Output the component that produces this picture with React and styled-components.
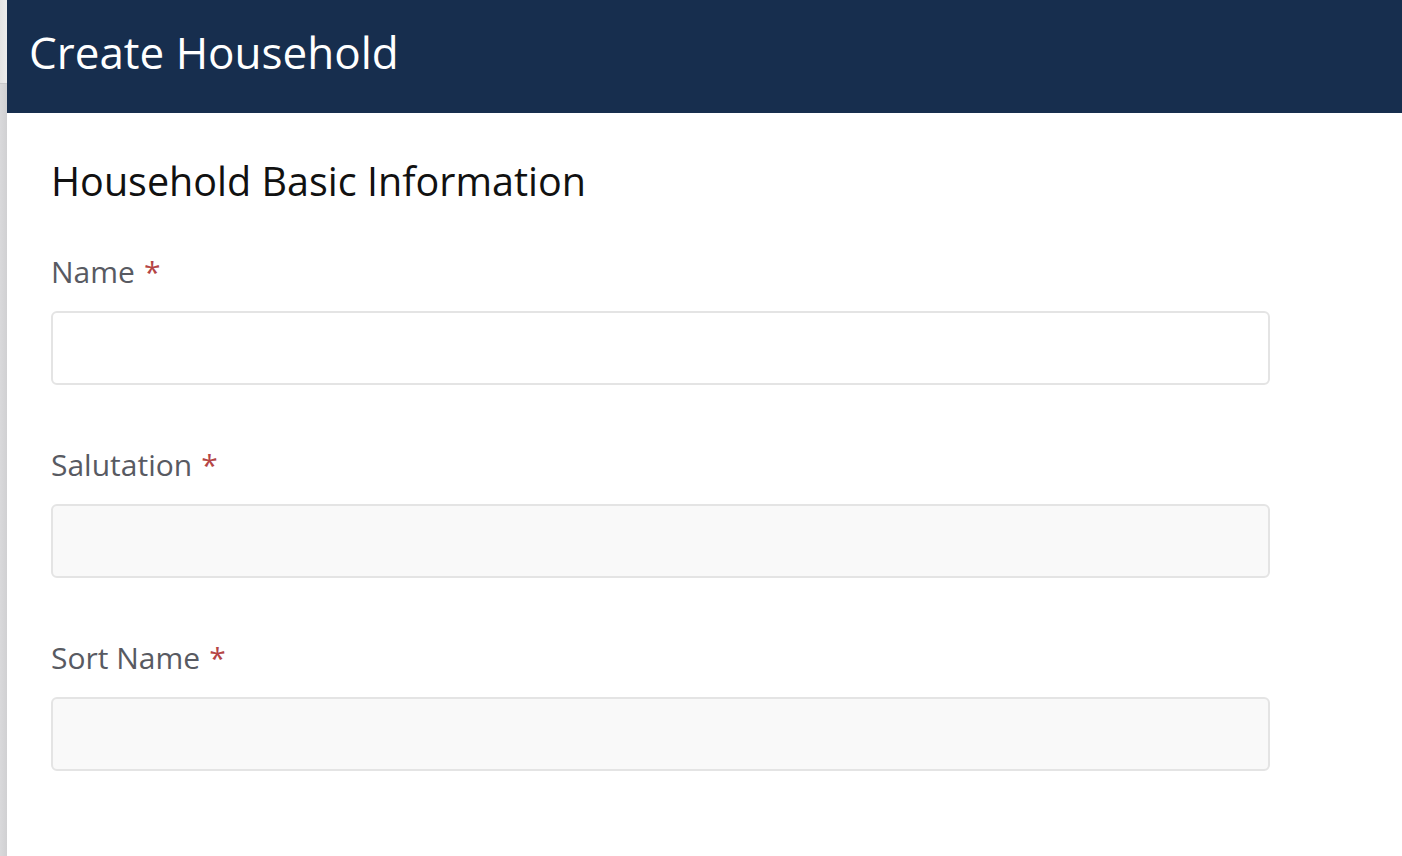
import React from 'react';
import styled, { createGlobalStyle } from 'styled-components';

const GlobalStyle = createGlobalStyle`
  html, body {
    margin: 0;
    padding: 0;
    background: #ffffff;
    font-family: "Open Sans", "Noto Sans", sans-serif;
    overflow: hidden;
  }
`;

const Page = styled.div`
  display: flex;
  height: 856px;
  overflow: hidden;
`;

const Backdrop = styled.div`
  width: 7px;
  flex-shrink: 0;
  display: flex;
  flex-direction: column;
`;

const BackdropTop = styled.div`
  height: 83px;
  background: linear-gradient(to right, #e4e4e4, #ededed);
  border-bottom: 1px solid #c9c9cb;
`;

const BackdropRest = styled.div`
  flex: 1;
  background: linear-gradient(to right, #d9d9db, #d0d0d2);
`;

const Modal = styled.div`
  flex: 1;
  display: flex;
  flex-direction: column;
  background: #ffffff;
  overflow: hidden;
`;

const Header = styled.div`
  flex-shrink: 0;
  height: 113px;
  background: #172e4e;
  display: flex;
  align-items: center;
  padding: 0 22px;
  box-sizing: border-box;
`;

const Title = styled.h1`
  margin: 0 0 8px 0;
  font-size: 44px;
  font-weight: 400;
  color: #ffffff;
  line-height: 1.2;
`;

const Body = styled.div`
  flex-shrink: 0;
  padding: 45px 132px 0 44px;
`;

const SectionTitle = styled.h2`
  margin: ${(p) => (p.$next ? '82px' : '0')} 0 46px 0;
  font-size: 39.5px;
  font-weight: 400;
  color: #111111;
  line-height: 1.2;
`;

const Field = styled.div`
  display: flex;
  flex-direction: column;
  gap: 18px;
  margin-bottom: 59px;
`;

const Label = styled.label`
  font-size: 30px;
  color: #585a62;
  line-height: 1.4;
`;

const Required = styled.span`
  color: #b54545;
  margin-left: 9px;
`;

const Input = styled.input`
  height: 74px;
  box-sizing: border-box;
  border: 2px solid #e4e4e4;
  border-radius: 6px;
  background: ${(p) => (p.disabled ? '#f9f9f9' : '#ffffff')};
  font-family: inherit;
  font-size: 28px;
  padding: 0 16px;
  outline: none;
  width: 100%;
`;

const fields = [
  { label: 'Name', disabled: false },
  { label: 'Salutation', disabled: true },
  { label: 'Sort Name', disabled: true },
];

export default function App() {
  return (
    <Page>
      <GlobalStyle />
      <Backdrop>
        <BackdropTop />
        <BackdropRest />
      </Backdrop>
      <Modal>
        <Header>
          <Title>Create Household</Title>
        </Header>
        <Body>
          <SectionTitle>Household Basic Information</SectionTitle>
          {fields.map((f) => (
            <Field key={f.label}>
              <Label>
                {f.label}
                <Required>*</Required>
              </Label>
              <Input disabled={f.disabled} />
            </Field>
          ))}
          <SectionTitle $next>Household Address</SectionTitle>
        </Body>
      </Modal>
    </Page>
  );
}
